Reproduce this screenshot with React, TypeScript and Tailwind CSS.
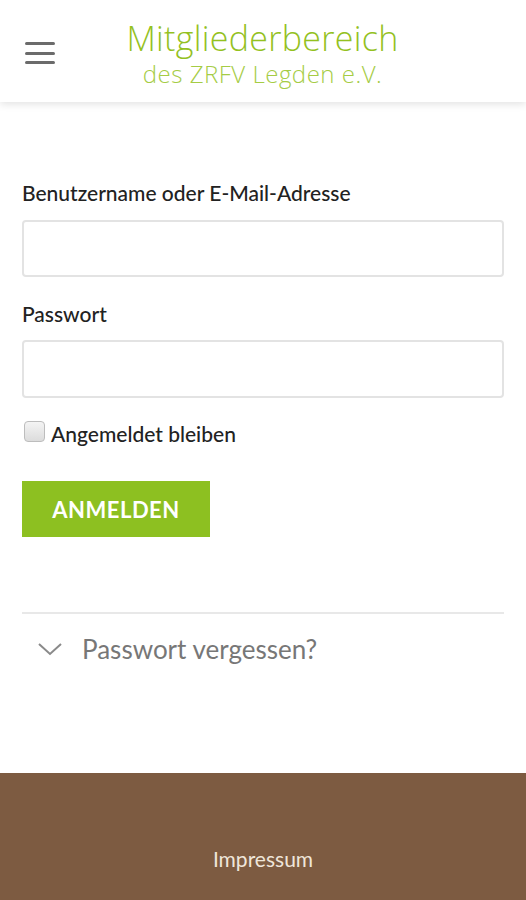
import { useState } from "react";

const App = () => {
  const [remember, setRemember] = useState(false);
  const [open, setOpen] = useState(false);

  return (
    <div className="min-h-[900px] flex flex-col bg-white" style={{ fontFamily: "Lato, 'Noto Sans', sans-serif" }}>
      <header className="h-[102px] flex items-center bg-white shadow-[0_2px_8px_rgba(0,0,0,0.12)] relative z-10">
        <button type="button" className="ml-[25px] mt-[4px] flex flex-col gap-[6.5px] w-[30px]" aria-label="Menü">
          <span className="block h-[3px] bg-[#6b6b6b] rounded-sm" />
          <span className="block h-[3px] bg-[#6b6b6b] rounded-sm" />
          <span className="block h-[3px] bg-[#6b6b6b] rounded-sm" />
        </button>
        <div className="flex-1 flex flex-col items-center gap-[7px] pr-[56px] mt-[4px]" style={{ fontFamily: "'Open Sans', Lato, sans-serif" }}>
          <div className="text-[34px] leading-[34px] text-[#94c11f] font-light tracking-[0.3px]">
            Mitgliederbereich
          </div>
          <div className="text-[24px] leading-[24px] text-[#a5cc45] font-light tracking-[0.5px]">
            des ZRFV Legden e.V.
          </div>
        </div>
      </header>

      <main className="flex-1 px-[22px] pt-[78px]">
        <form onSubmit={(e) => e.preventDefault()}>
          <label className="block text-[21px] text-[#222] font-medium mb-[14px] leading-[26px]">Benutzername oder E-Mail-Adresse</label>
          <input type="text" className="w-full h-[57px] border-2 border-[#e3e3e3] rounded-[4px] px-3 outline-none" />

          <label className="block text-[21px] text-[#222] font-medium mt-[24px] mb-[13px] leading-[26px]">Passwort</label>
          <input type="password" className="w-full h-[58px] border-2 border-[#e3e3e3] rounded-[4px] px-3 outline-none" />

          <label className="flex items-center gap-[6px] mt-[23px] text-[21px] text-[#222] font-medium leading-[26px]">
            <input
              type="checkbox"
              checked={remember}
              onChange={(e) => setRemember(e.target.checked)}
              className="appearance-none w-[21px] h-[21px] ml-[2px] mt-[-6px] border border-[#bdbdbd] rounded-[4px] bg-gradient-to-b from-[#f4f4f4] to-[#dcdcdc] checked:bg-[#94c11f]"
            />
            Angemeldet bleiben
          </label>

          <button
            type="submit"
            className="mt-[34px] w-[188px] h-[56px] bg-[#8dc021] text-white text-[22px] font-bold tracking-[0.5px]"
          >
            ANMELDEN
          </button>
        </form>

        <div className="mt-[75px] border-t-2 border-[#e8e8e8]">
          <button type="button" onClick={() => setOpen(!open)} className="flex items-center mt-[19px] text-[#777]">
            <svg width="26" height="16" viewBox="0 0 26 16" className="ml-[15px]" fill="none" stroke="#8a8a8a" strokeWidth="2">
              <path d="M2 3 L13 13 L24 3" />
            </svg>
            <span className="ml-[19px] text-[26px] leading-[32px] text-[#777]">Passwort vergessen?</span>
          </button>
        </div>
      </main>

      <footer className="h-[127px] bg-[#7d5b41] flex items-end justify-center pb-[26px]">
        <a className="text-[21px] text-[#efe6da]">Impressum</a>
      </footer>
    </div>
  );
};

export default App;
